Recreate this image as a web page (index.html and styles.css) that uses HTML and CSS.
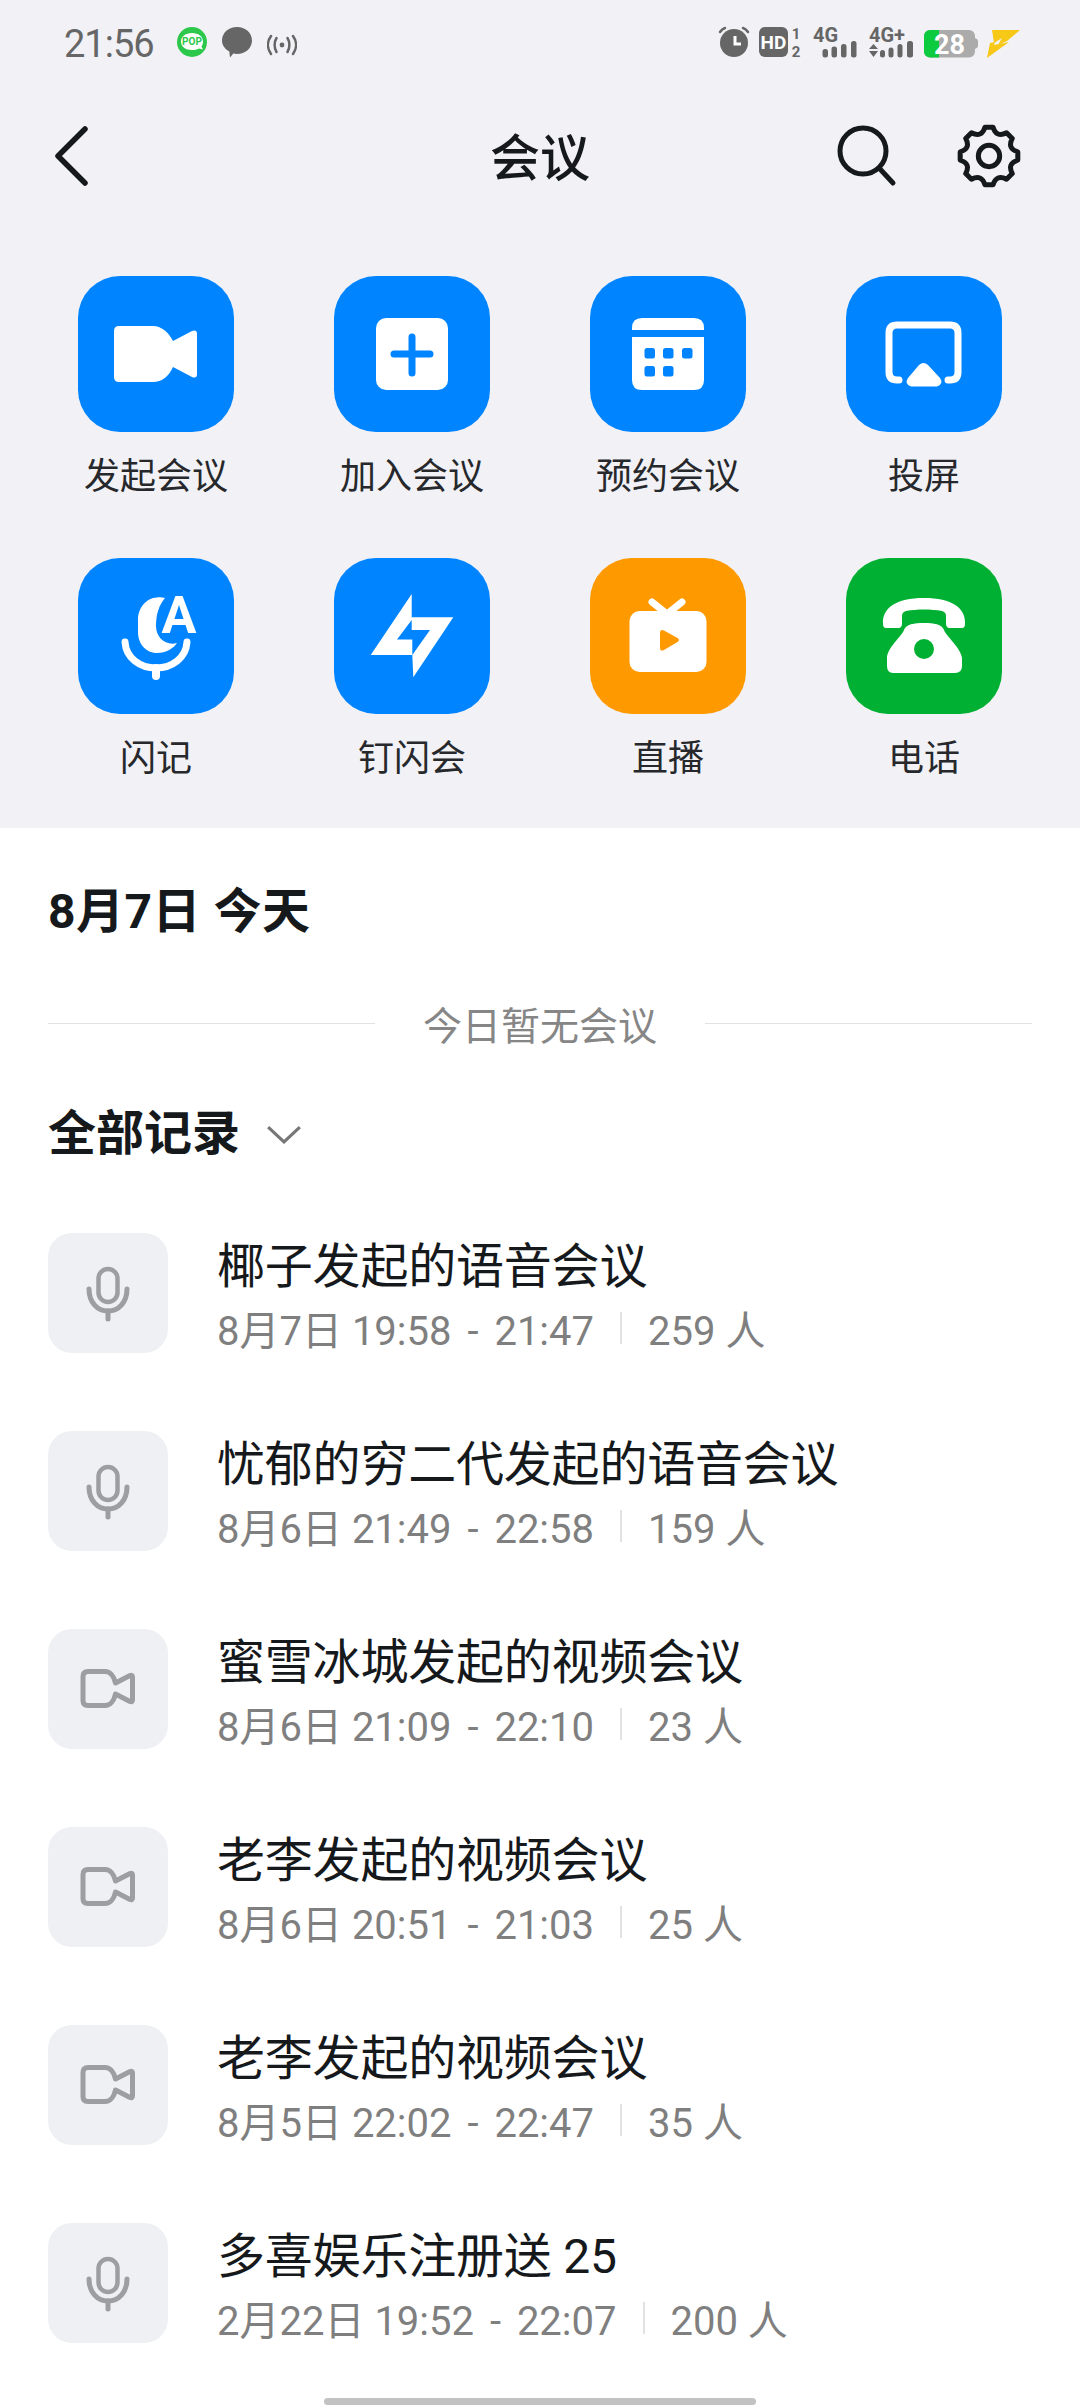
FILE: index.html
```html
<!DOCTYPE html>
<html lang="zh-CN">
<head>
  <meta charset="UTF-8">
  <title>会议</title>
  <link rel="stylesheet" href="styles.css">
</head>
<body>

  <svg class="defs">
    <symbol id="mic" viewBox="0 0 120 120">
      <rect x="50.500" y="36" width="19" height="33" rx="9.500" fill="none" stroke="#9c9ea2" stroke-width="4.500"/>
      <path d="M41 56c0 13 8 22 19 22s19-9 19-22" fill="none" stroke="#9c9ea2" stroke-width="5" stroke-linecap="round"/>
      <path d="M60 78v8" fill="none" stroke="#9c9ea2" stroke-width="5" stroke-linecap="round"/>
    </symbol>
    <symbol id="cam" viewBox="0 0 120 120">
      <path d="M40 42.500H57C62 42.500 66 47 67.500 54L82 46.500Q84.500 45.500 84.500 48V71Q84.500 73.500 82 72.500L67.500 65C66 72 62 76.500 57 76.500H40Q35 76.500 35 71.500V47.500Q35 42.500 40 42.500Z" fill="none" stroke="#9c9ea2" stroke-width="5" stroke-linejoin="round"/>
    </symbol>
  </svg>

  <header class="top">
    <div class="status">
      <span class="time">21:56</span>
      <svg class="st st-left" viewBox="0 0 30 36">
        <circle cx="15" cy="18" r="15" fill="#2cc84b"/>
        <path d="M15 9c6.500 0 11 3.500 11 8.500 0 2-.5 3.500-1.500 5l1.500 3-4-1c-2 1-4.500 1.500-7 1.500-6.500 0-11-3.500-11-8.500S8.500 9 15 9z" fill="#fff"/>
        <text x="15" y="21" class="st-pop">POP</text>
      </svg>
      <svg class="st st-left" viewBox="0 0 30 36">
        <path d="M15 3c8.300 0 15 5.800 15 13.500S23.300 30 15 30c-1.300 0-2.500-.1-3.700-.4L8 33.500 7.300 27.500C3 25 0 21.200 0 16.500 0 8.800 6.700 3 15 3z" fill="#666"/>
      </svg>
      <svg class="st st-left" viewBox="0 0 30 36">
        <circle cx="15" cy="21" r="2.400" fill="#666"/>
        <path d="M9.500 14c-2.500 4-2.500 10 0 14M20.500 14c2.500 4 2.500 10 0 14M4 12c-4 5.500-4 12.500 0 18M26 12c4 5.500 4 12.500 0 18" fill="none" stroke="#666" stroke-width="2.500" stroke-linecap="round"/>
      </svg>

      <div class="status-right">
        <svg class="st st-alarm" viewBox="0 0 32 36">
          <circle cx="16" cy="19" r="14" fill="#666"/>
          <path d="M2 8q2-3 5-4M30 8q-2-3-5-4" fill="none" stroke="#666" stroke-width="2.500" stroke-linecap="round"/>
          <path d="M17 12v8h6" fill="none" stroke="#fff" stroke-width="3"/>
        </svg>
        <svg class="st st-hd" viewBox="0 0 45 36">
          <rect x="0" y="3" width="29" height="30" rx="6" fill="#666"/>
          <text x="14.500" y="25" class="st-hd-text">HD</text>
          <text x="37" y="15" class="st-num">1</text>
          <text x="37" y="33" class="st-num">2</text>
        </svg>
        <svg class="st st-sig" viewBox="0 0 47 36">
          <text x="0" y="18" class="st-net">4G</text>
          <rect x="9.500" y="25" width="5.500" height="8.500" rx="2.500" fill="#666"/>
          <rect x="18.500" y="22.500" width="5.500" height="11" rx="2.500" fill="#666"/>
          <rect x="28" y="20" width="5.500" height="13.500" rx="2.500" fill="#666"/>
          <rect x="38" y="17" width="5.500" height="16.500" rx="2.500" fill="#666"/>
        </svg>
        <svg class="st st-sigplus" viewBox="0 0 46 36">
          <text x="0" y="18" class="st-net">4G+</text>
          <path d="M0 25l4.500-5 4.500 5zM0 27l4.500 6 4.500-6z" fill="#666"/>
          <rect x="11" y="26" width="5" height="7.500" rx="2.500" fill="#666"/>
          <rect x="19.500" y="23.500" width="5" height="10" rx="2.500" fill="#666"/>
          <rect x="28.500" y="20" width="5" height="13.500" rx="2.500" fill="#666"/>
          <rect x="38" y="17" width="6" height="16.500" rx="2.500" fill="#666"/>
        </svg>
        <svg class="st st-batt" viewBox="0 0 54 36">
          <rect x="0" y="6" width="51" height="27.500" rx="6" fill="#ababab"/>
          <path d="M6 6h9v27.500H6a6 6 0 0 1-6-6V12a6 6 0 0 1 6-6z" fill="#0ccb3f"/>
          <path d="M51 14q3 1 3 3v5q0 2-3 3z" fill="#ababab"/>
          <text x="25.500" y="30" class="st-batt-text">28</text>
        </svg>
        <svg class="st st-bolt" viewBox="0 0 33 36">
          <path d="M5 6h28L20 17l-9 4 4-7-8 5z" fill="#f7c815"/>
          <path d="M3 19l5-1-1 3 15-3L0 34z" fill="#f7c815"/>
        </svg>
      </div>
    </div>

    <nav class="nav">
      <svg class="back" viewBox="0 0 40 64">
        <path d="M32 6L5 33l27 27" fill="none" stroke="#16191c" stroke-width="5.500" stroke-linecap="round" stroke-linejoin="round"/>
      </svg>
      <h1 class="nav-title">会议</h1>
      <div class="nav-actions">
        <svg class="search" viewBox="0 0 60 64">
          <circle cx="26" cy="26" r="23" fill="none" stroke="#16191c" stroke-width="5"/>
          <path d="M43 44l13 14" fill="none" stroke="#16191c" stroke-width="5" stroke-linecap="round"/>
        </svg>
        <svg class="gear" viewBox="-1 -1 66 66">
          <circle cx="32" cy="32" r="11" fill="none" stroke="#16191c" stroke-width="5.200"/>
          <path d="M27.800 2.300L36.200 2.300Q39.650 13.500 50.100 8L56 13.900Q50.500 24.350 61.700 27.800L61.700 36.200Q50.500 39.650 56 50.100L50.100 56Q39.650 50.500 36.200 61.700L27.800 61.700Q24.350 50.500 13.900 56L8 50.100Q13.500 39.650 2.300 36.200L2.300 27.800Q13.500 24.350 8 13.900L13.900 8Q24.350 13.500 27.800 2.300Z" fill="none" stroke="#16191c" stroke-width="5.200" stroke-linejoin="round"/>
        </svg>
      </div>
    </nav>

    <div class="tools">
      <div class="tool">
        <div class="tool-icon">
          <svg viewBox="0 0 156 156"><path d="M41 50h34c9 0 16 7 20 15l19-10q5-2 5 3v40q0 5-5 3L95 91c-4 9-11 15-20 15H41q-5 0-5-5V55q0-5 5-5z" fill="#fff"/></svg>
        </div>
        <span class="tool-label">发起会议</span>
      </div>
      <div class="tool">
        <div class="tool-icon">
          <svg viewBox="0 0 156 156">
            <rect x="42" y="42" width="72" height="72" rx="10" fill="#fff"/>
            <path d="M78 61v36M60 78h36" fill="none" stroke="#0084ff" stroke-width="7" stroke-linecap="round"/>
          </svg>
        </div>
        <span class="tool-label">加入会议</span>
      </div>
      <div class="tool">
        <div class="tool-icon">
          <svg viewBox="0 0 156 156">
            <path d="M52 42h52q10 0 10 10v2H42v-2q0-10 10-10z" fill="#fff"/>
            <path d="M42 61h72v43q0 10-10 10H52q-10 0-10-10z" fill="#fff"/>
            <g fill="#0084ff">
              <rect x="54.500" y="72" width="10.500" height="10.500" rx="2.500"/>
              <rect x="73" y="72" width="10.500" height="10.500" rx="2.500"/>
              <rect x="92" y="72" width="10.500" height="10.500" rx="2.500"/>
              <rect x="54.500" y="90" width="10.500" height="10.500" rx="2.500"/>
              <rect x="73" y="90" width="10.500" height="10.500" rx="2.500"/>
            </g>
          </svg>
        </div>
        <span class="tool-label">预约会议</span>
      </div>
      <div class="tool">
        <div class="tool-icon">
          <svg viewBox="0 0 156 156">
            <path d="M53 104h-2q-8 0-8-8V57q0-8 8-8h53q8 0 8 8v39q0 8-8 8h-2" fill="none" stroke="#fff" stroke-width="7" stroke-linecap="round"/>
            <path d="M73 89q4.500-4 9 0l12 13q4 6-3 8.500H65q-7-2.500-3-8.500z" fill="#fff"/>
          </svg>
        </div>
        <span class="tool-label">投屏</span>
      </div>

      <div class="tool">
        <div class="tool-icon">
          <svg viewBox="0 0 156 156">
            <path d="M79 39.500C68 40 60 50 60 62v12c0 12 8 21 19 21 9 0 17-5 20-10-11 3-21-5-21-17 0-12 3-21 9-28-3-1-6-1-8-.5z" fill="#fff"/>
            <path d="M47 84c1 16 15 26 31 26s30-10 31-26" fill="none" stroke="#fff" stroke-width="7" stroke-linecap="round"/>
            <path d="M78 110v8" fill="none" stroke="#fff" stroke-width="8" stroke-linecap="round"/>
            <text x="101" y="75" class="tool-a">A</text>
          </svg>
        </div>
        <span class="tool-label">闪记</span>
      </div>
      <div class="tool">
        <div class="tool-icon">
          <svg viewBox="0 0 156 156">
            <path fill-rule="evenodd" d="M77.700 36v23.300h41.600L79.300 119.300 78.300 97H36.700zM77.700 62L63 81.500h15.300V97L96 72H77.700z" fill="#fff"/>
          </svg>
        </div>
        <span class="tool-label">钉闪会</span>
      </div>
      <div class="tool tool-orange">
        <div class="tool-icon">
          <svg viewBox="0 0 156 156">
            <path d="M62 44l15 12 15-12" fill="none" stroke="#fff" stroke-width="7" stroke-linecap="round"/>
            <rect x="39.500" y="53" width="77" height="61" rx="10" fill="#fff"/>
            <path d="M70 75q0-4 4-2.500l13.500 7.500q3 2 0 4L74 92q-4 2-4-2.500z" fill="#ff9900"/>
          </svg>
        </div>
        <span class="tool-label">直播</span>
      </div>
      <div class="tool tool-green">
        <div class="tool-icon">
          <svg viewBox="0 0 156 156">
            <path d="M37 66C36 50 50 40 78 40s42 10 41 26q0 4-3 4h-13q-3-1-3-4v-8q0-4-4-5c-11-2-25-2-36 0q-4 1-4 5v8q0 3-3 4H40q-3 0-3-4z" fill="#fff"/>
            <path fill-rule="evenodd" d="M78 65c10 0 18 1 20 7 2 6 17 18 18 28v8q0 7-7 7H47q-6 0-6-7v-8c0-10 15-22 17-28 2-6 10-7 20-7zm0 16a10 10 0 1 0 0 20 10 10 0 1 0 0-20z" fill="#fff"/>
          </svg>
        </div>
        <span class="tool-label">电话</span>
      </div>
    </div>
  </header>

  <main class="content">
    <h2 class="heading today">8月7日 今天</h2>

    <div class="empty">
      <span class="empty-line"></span>
      <span class="empty-text">今日暂无会议</span>
      <span class="empty-line"></span>
    </div>

    <div class="heading filter">
      全部记录
      <svg class="chevron" viewBox="0 0 34 18"><path d="M2 2l15 14L32 2" fill="none" stroke="#777" stroke-width="3"/></svg>
    </div>

    <ul class="records">
      <li class="record">
        <div class="record-icon"><svg><use href="#mic"/></svg></div>
        <div>
          <div class="record-title">椰子发起的语音会议</div>
          <div class="record-meta"><span>8月7日 <span class="range">19:58 - 21:47</span></span><i class="sep"></i><span>259 人</span></div>
        </div>
      </li>
      <li class="record">
        <div class="record-icon"><svg><use href="#mic"/></svg></div>
        <div>
          <div class="record-title">忧郁的穷二代发起的语音会议</div>
          <div class="record-meta"><span>8月6日 <span class="range">21:49 - 22:58</span></span><i class="sep"></i><span>159 人</span></div>
        </div>
      </li>
      <li class="record">
        <div class="record-icon"><svg><use href="#cam"/></svg></div>
        <div>
          <div class="record-title">蜜雪冰城发起的视频会议</div>
          <div class="record-meta"><span>8月6日 <span class="range">21:09 - 22:10</span></span><i class="sep"></i><span>23 人</span></div>
        </div>
      </li>
      <li class="record">
        <div class="record-icon"><svg><use href="#cam"/></svg></div>
        <div>
          <div class="record-title">老李发起的视频会议</div>
          <div class="record-meta"><span>8月6日 <span class="range">20:51 - 21:03</span></span><i class="sep"></i><span>25 人</span></div>
        </div>
      </li>
      <li class="record">
        <div class="record-icon"><svg><use href="#cam"/></svg></div>
        <div>
          <div class="record-title">老李发起的视频会议</div>
          <div class="record-meta"><span>8月5日 <span class="range">22:02 - 22:47</span></span><i class="sep"></i><span>35 人</span></div>
        </div>
      </li>
      <li class="record">
        <div class="record-icon"><svg><use href="#mic"/></svg></div>
        <div>
          <div class="record-title">多喜娱乐注册送 25</div>
          <div class="record-meta"><span>2月22日 <span class="range">19:52 - 22:07</span></span><i class="sep"></i><span>200 人</span></div>
        </div>
      </li>
    </ul>
  </main>

  <div class="home-bar"></div>

</body>
</html>
```

FILE: styles.css
```css
* {
  box-sizing: border-box;
}

html, body {
  margin: 0;
  padding: 0;
}

body {
  position: relative;
  width: 1080px;
  height: 2408px;
  overflow: hidden;
  background: #fff;
  color: #16191c;
  font-family: Roboto, "Noto Sans CJK SC", sans-serif;
}

.defs {
  display: none;
}

svg {
  display: block;
}

/* top grey part */
.top {
  height: 828px;
  background: #f1f1f6;
}

.status {
  display: flex;
  align-items: flex-start;
  height: 90px;
  padding: 24px 60px 0 64px;
  color: #666;
}

.time {
  width: 91px;
  font-size: 38px;
  letter-spacing: -1px;
  line-height: 40px;
}

.st {
  height: 36px;
  flex: none;
}

.st-left {
  width: 30px;
  margin-left: 15px;
}

.time + .st-left {
  margin-left: 22px;
}

.status-right {
  display: flex;
  gap: 9px;
  margin-left: auto;
}

.st-alarm { width: 32px; }
.st-hd { width: 45px; }
.st-sig { width: 47px; }
.st-sigplus { width: 46px; }
.st-batt { width: 54px; }
.st-bolt { width: 33px; }

.st-pop {
  font: 700 10px Roboto, sans-serif;
  fill: #2cc84b;
  text-anchor: middle;
}

.st-hd-text {
  font: 700 19px Roboto, sans-serif;
  fill: #fff;
  text-anchor: middle;
}

.st-num {
  font: 700 15px Roboto, sans-serif;
  fill: #666;
  text-anchor: middle;
}

.st-net {
  font: 700 20px Roboto, sans-serif;
  fill: #666;
}

.st-batt-text {
  font: 700 27px Roboto, sans-serif;
  fill: #fff;
  text-anchor: middle;
}

.nav {
  position: relative;
  display: flex;
  align-items: center;
  justify-content: space-between;
  height: 134px;
  padding: 0 59px 0 53px;
}

.back {
  width: 40px;
  height: 64px;
  margin-top: -4px;
}

.nav-title {
  position: absolute;
  left: 0;
  right: 0;
  margin: 0;
  padding-top: 4px;
  text-align: center;
  font-size: 50px;
  font-weight: 500;
  line-height: 64px;
}

.nav-actions {
  display: flex;
  align-items: center;
  gap: 60px;
}

.search {
  width: 60px;
  height: 64px;
}

.gear {
  width: 64px;
  height: 64px;
  margin-top: -2px;
}

.tools {
  display: grid;
  grid-template-columns: repeat(4, 256px);
  row-gap: 57px;
  padding: 52px 28px 0;
}

.tool {
  display: flex;
  flex-direction: column;
  align-items: center;
}

.tool-icon {
  width: 156px;
  height: 156px;
  border-radius: 42px;
  background: #0084ff;
}

.tool-orange .tool-icon {
  background: #ff9900;
}

.tool-green .tool-icon {
  background: #00b033;
}

.tool-label {
  margin-top: 21px;
  font-size: 36px;
  line-height: 48px;
  color: #26282b;
}

.tool-a {
  font: 700 52px Roboto, sans-serif;
  fill: #fff;
  text-anchor: middle;
}

/* white part */
.content {
  padding: 52px 48px 0;
}

.heading {
  margin: 0;
  font-size: 48px;
  font-weight: 700;
  line-height: 64px;
}

.today {
  letter-spacing: 0.5px;
}

.empty {
  display: flex;
  align-items: center;
  height: 50px;
  margin-top: 54px;
}

.empty-line {
  flex: 1;
  height: 1px;
  background: #e2e2e2;
}

.empty-text {
  margin: 0 48px;
  padding-top: 8px;
  font-size: 39px;
  line-height: 50px;
  color: #868686;
}

.filter {
  display: flex;
  align-items: center;
  gap: 26px;
  margin-top: 54px;
}

.chevron {
  width: 36px;
  height: 19px;
}

.records {
  list-style: none;
  margin: 67px 0 0;
  padding: 0;
}

.record {
  display: flex;
  gap: 49px;
  height: 198px;
}

.record-icon {
  width: 120px;
  height: 120px;
  border-radius: 24px;
  background: #eef0f4;
}

.record-icon svg {
  width: 120px;
  height: 120px;
}

.record-title {
  font-size: 48px;
  letter-spacing: -0.2px;
  line-height: 68px;
}

.record-meta {
  display: flex;
  align-items: center;
  height: 54px;
  font-size: 40px;
  color: #7f7f7f;
}

.range {
  word-spacing: 6px;
}

.sep {
  width: 2px;
  height: 32px;
  margin: 0 26px;
  background: #e2e2e2;
}

.home-bar {
  position: absolute;
  left: 324px;
  top: 2398px;
  width: 432px;
  height: 7px;
  border-radius: 4px;
  background: #c2c2c2;
}
```
